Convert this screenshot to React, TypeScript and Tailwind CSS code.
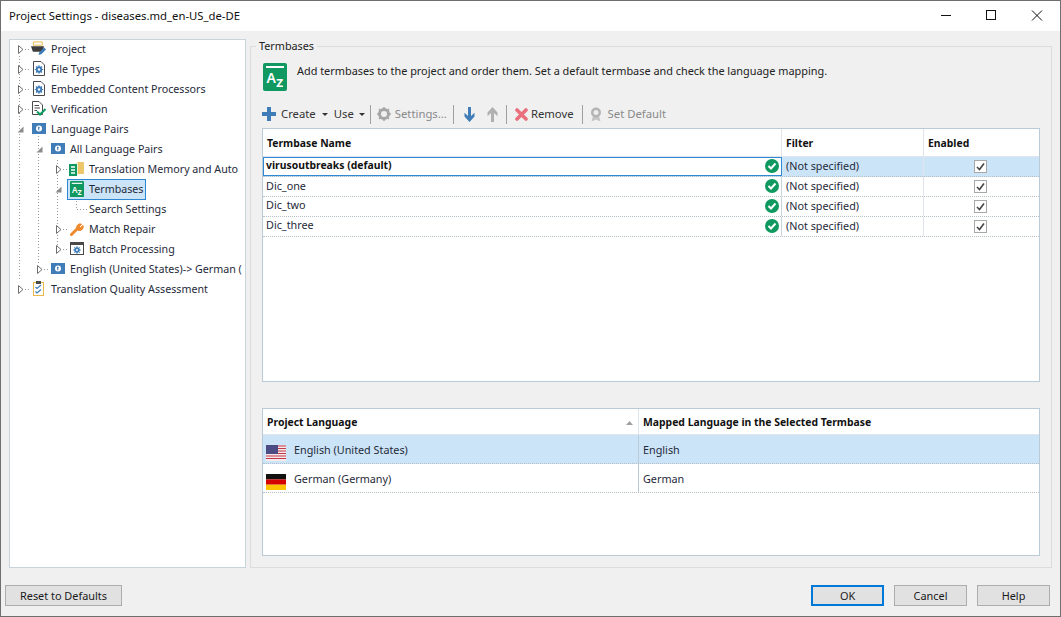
import type { ReactNode } from 'react';

const FONT = "font-['Noto_Sans','Open_Sans',sans-serif]";

function Arrow({ open }: { open?: boolean }) {
  return open ? (
    <svg width="7" height="7" viewBox="0 0 7 7" className="shrink-0">
      <path d="M6.5 0.5V6.5H0.5Z" fill="#8c8c8c" />
    </svg>
  ) : (
    <svg width="6" height="9" viewBox="0 0 6 9" className="shrink-0">
      <path d="M0.5 0.5L5 4.5L0.5 8.5Z" fill="#fff" stroke="#6e6e6e" />
    </svg>
  );
}

function GlobeIcon() {
  return (
    <svg width="14" height="11" viewBox="0 0 14 11">
      <rect width="14" height="11" fill="#3f7cb8" />
      <circle cx="7" cy="5.5" r="3" fill="#fff" />
      <path d="M6 3.5L8 4.5L7 6L7.5 7.5L6.2 7Z" fill="#3f7cb8" />
    </svg>
  );
}

function DocGearIcon() {
  return (
    <svg width="12" height="15" viewBox="0 0 12 15">
      <path d="M0.5 0.5H8L11.5 4V14.5H0.5Z" fill="#fff" stroke="#4a4a4a" />
      <circle cx="6" cy="8.5" r="3.2" fill="#3f7cb8" />
      <path d="M6 4.2V12.8M1.8 8.5H10.2M3 5.5L9 11.5M9 5.5L3 11.5" stroke="#3f7cb8" strokeWidth="1.1" />
      <circle cx="6" cy="8.5" r="1.2" fill="#fff" />
    </svg>
  );
}

function ProjectIcon() {
  return (
    <svg width="16" height="15" viewBox="0 0 16 15">
      <path d="M2.5 0.5H12V4H2.5Z" fill="#fff" stroke="#e8b84a" />
      <path d="M0 5H14L12 11H2Z" fill="#3d3d3d" />
      <path d="M8 14.5L9 11.5L14 6.5L16 8.5L11 13.5Z" fill="#3f7cb8" />
    </svg>
  );
}

function VerifyIcon() {
  return (
    <svg width="14" height="15" viewBox="0 0 14 15">
      <path d="M0.5 0.5H7L10.5 4V13.5H0.5Z" fill="#fff" stroke="#4a4a4a" />
      <path d="M2.5 4.5H7M2.5 7H8M2.5 9.5H5" stroke="#4a4a4a" />
      <path d="M5 10.5L8 13.5L13.5 8" fill="none" stroke="#0f9d66" strokeWidth="2" />
    </svg>
  );
}

function AzIcon({ size = 14 }: { size?: number }) {
  return (
    <svg width={size} height={(size * 7) / 6} viewBox="0 0 24 28" className="shrink-0">
      <rect width="24" height="28" rx="2" fill="#0f9960" />
      <rect x="3" y="3" width="18" height="2" fill="#fff" />
      <text x="3.5" y="20" fontSize="14" fontWeight="600" fill="#fff" fontFamily="'Noto Sans', sans-serif">A</text>
      <text x="13" y="24" fontSize="15" fontWeight="600" fill="#fff" fontFamily="'Noto Sans', sans-serif">z</text>
    </svg>
  );
}

function TmIcon() {
  return (
    <svg width="15" height="14" viewBox="0 0 15 14">
      <rect x="8" y="0" width="7" height="12" rx="1" fill="#eec66a" />
      <rect x="5" y="1" width="4" height="12" fill="#f4f0d8" />
      <rect x="0" y="2" width="8" height="12" fill="#0f9960" />
      <path d="M2 5H6M2 8H6M2 11H6" stroke="#fff" strokeWidth="1.4" />
    </svg>
  );
}

function WrenchIcon() {
  return (
    <svg width="14" height="14" viewBox="0 0 14 14">
      <path d="M1.5 12.5L7 7" stroke="#ee8a2c" strokeWidth="3" strokeLinecap="round" />
      <path d="M7 7A3.5 3.5 0 0 1 11.5 2.2L9.5 4.5L10.5 5.5L13 3.5A3.7 3.7 0 0 1 8 8.2Z" fill="#ee8a2c" stroke="#ee8a2c" />
    </svg>
  );
}

function BatchIcon() {
  return (
    <svg width="14" height="13" viewBox="0 0 14 13">
      <rect x="0.5" y="0.5" width="13" height="12" fill="#fff" stroke="#4a4a4a" />
      <rect x="0" y="0" width="14" height="3" fill="#4a4a4a" />
      <circle cx="7" cy="8" r="2.8" fill="#3f7cb8" />
      <path d="M7 4.2V11.8M3.2 8H10.8M4.3 5.3L9.7 10.7M9.7 5.3L4.3 10.7" stroke="#3f7cb8" />
      <circle cx="7" cy="8" r="1" fill="#fff" />
    </svg>
  );
}

function QaIcon() {
  return (
    <svg width="11" height="15" viewBox="0 0 11 15">
      <rect x="0.5" y="1.5" width="10" height="13" fill="#fff" stroke="#e8b84a" />
      <rect x="3" y="0" width="5" height="3" fill="#4a4a4a" />
      <path d="M2.5 6L4 7.5L8 4M2.5 10.5L4 12L8 8.5" fill="none" stroke="#3f7cb8" strokeWidth="1.2" />
    </svg>
  );
}

const TREE: { label: string; depth: number; open?: boolean; noArrow?: boolean; selected?: boolean; icon?: ReactNode }[] = [
  { label: 'Project', depth: 0, icon: <ProjectIcon /> },
  { label: 'File Types', depth: 0, icon: <DocGearIcon /> },
  { label: 'Embedded Content Processors', depth: 0, icon: <DocGearIcon /> },
  { label: 'Verification', depth: 0, icon: <VerifyIcon /> },
  { label: 'Language Pairs', depth: 0, open: true, icon: <GlobeIcon /> },
  { label: 'All Language Pairs', depth: 1, open: true, icon: <GlobeIcon /> },
  { label: 'Translation Memory and Auto', depth: 2, icon: <TmIcon /> },
  { label: 'Termbases', depth: 2, open: true, selected: true, icon: <AzIcon /> },
  { label: 'Search Settings', depth: 2, noArrow: true },
  { label: 'Match Repair', depth: 2, icon: <WrenchIcon /> },
  { label: 'Batch Processing', depth: 2, icon: <BatchIcon /> },
  { label: 'English (United States)-> German (', depth: 1, icon: <GlobeIcon /> },
  { label: 'Translation Quality Assessment', depth: 0, icon: <QaIcon /> },
];

const PAD = ['pl-[7px]', 'pl-[26px]', 'pl-[45px]'];

function TreeConnectors() {
  return (
    <svg width="100" height="270" className="absolute left-0 top-0 pointer-events-none">
      <g stroke="#9a9a9a" strokeDasharray="1 2" fill="none">
        <path d="M9.5 16V240" />
        <path d="M28.5 96V224" />
        <path d="M47.5 120V206" />
        <path d="M66.5 158V169.5H77" />
        <path d="M15 9.5H20M15 29.5H20M15 49.5H20M15 69.5H20M15 249.5H20M34 229.5H39M53 129.5H58M53 189.5H58M53 209.5H58" />
      </g>
    </svg>
  );
}

function Sep() {
  return <span className="block w-px h-[19px] bg-[#a0a0a0]" />;
}

function Caret() {
  return (
    <svg width="6" height="3" viewBox="0 0 6 3" className="block shrink-0">
      <path d="M0 0H6L3 3Z" fill="#333" />
    </svg>
  );
}

function Check() {
  return (
    <svg width="16" height="16" viewBox="0 0 16 16" className="shrink-0 -mt-[2px]">
      <circle cx="8" cy="8" r="7" fill="#0f9960" />
      <path d="M4.5 8L7 10.5L11.5 5.5" fill="none" stroke="#fff" strokeWidth="2" />
    </svg>
  );
}

function CheckBox() {
  return (
    <span className="w-[13px] h-[13px] border border-[#a8a8a8] bg-white flex items-center justify-center">
      <svg width="9" height="9" viewBox="0 0 9 9">
        <path d="M1 5L3.5 7.5L8 1.5" fill="none" stroke="#444" strokeWidth="1.6" />
      </svg>
    </span>
  );
}

function UsFlag() {
  return (
    <svg width="20" height="16" viewBox="0 0 20 16" className="shrink-0 mt-[10px]">
      <rect width="20" height="16" fill="#f6e9ea" />
      <path d="M0 1H20M0 3.5H20M0 6H20M0 8.5H20M0 11H20M0 13.5H20" stroke="#c0394b" strokeWidth="1.2" />
      <rect width="12" height="9" fill="#4d4d85" />
    </svg>
  );
}

function DeFlag() {
  return (
    <svg width="20" height="16" viewBox="0 0 20 16" className="shrink-0 mt-[10px]">
      <rect width="20" height="5.4" fill="#111" />
      <rect y="5.4" width="20" height="5.3" fill="#d40000" />
      <rect y="10.7" width="20" height="5.3" fill="#fcc400" />
    </svg>
  );
}

const TERMBASES = ['virusoutbreaks (default)', 'Dic_one', 'Dic_two', 'Dic_three'];

function FooterButton({ label, width, primary }: { label: string; width: string; primary?: boolean }) {
  return (
    <button
      className={`${width} h-[21px] pt-[2px] bg-[#e1e1e1] flex items-center justify-center text-[#1a1a1a] text-[10.9px] ${
        primary ? 'border-2 border-[#0078d7]' : 'border border-[#adadad]'
      }`}
    >
      {label}
    </button>
  );
}

export default function App() {
  return (
    <div className={`${FONT} w-[1061px] h-[617px] flex flex-col border border-[#6e6e6e] text-[10.8px] text-[#1f2a3a] bg-[#f0f0f0] overflow-hidden`}>
      <div className="h-[30px] shrink-0 bg-white flex items-center pl-[8px]">
        <span className="flex-1 text-[11.3px] text-[#111]">Project Settings - diseases.md_en-US_de-DE</span>
        <svg width="120" height="30" viewBox="0 0 120 30">
          <path d="M1 14.5H11" stroke="#111" />
          <rect x="46.5" y="9.5" width="9" height="9" fill="none" stroke="#111" />
          <path d="M92 9.5L102 19.5M102 9.5L92 19.5" stroke="#111" />
        </svg>
      </div>

      <div className="flex-1 flex flex-col px-[8px]">
        <div className="flex gap-[4px] mt-[8px] h-[529px]">
          <div className="relative w-[237px] shrink-0 bg-white border border-[#c8d4dc] text-[10.7px]">
            <TreeConnectors />
            <div className="-mt-px">
              {TREE.map((n) => (
                <div key={n.label} className={`relative h-5 flex items-center whitespace-nowrap ${PAD[n.depth]}`}>
                  <span className="w-[7px] flex justify-center">{!n.noArrow && <Arrow open={n.open} />}</span>
                  <span
                    className={`flex items-center ${
                      n.selected ? 'ml-[5px] h-[21px] pl-px pr-[2px] bg-[#cce4f7] border border-[#2a87d0]' : 'ml-[7px]'
                    }`}
                  >
                    <span className="w-[15px] flex justify-center">{n.icon}</span>
                    <span className="ml-[5px]">{n.label}</span>
                  </span>
                </div>
              ))}
            </div>
          </div>

          <fieldset className="flex-1 min-w-0 h-[529px] border border-[#dcdcdc] px-[11px] pb-[11px]">
            <legend className="ml-[-6px] px-[3px] text-[#222] leading-[14px]">Termbases</legend>
            <div className="flex items-start gap-[10px] h-[42px] pt-[10px] pl-px">
              <AzIcon size={24} />
              <span className="text-[#222] text-[10.9px] leading-[16px]">Add termbases to the project and order them. Set a default termbase and check the language mapping.</span>
            </div>
            <div className="flex items-center h-[24px] mt-[7px] text-[#333] text-[11.3px]">
              <svg width="14" height="14" viewBox="0 0 14 14">
                <path d="M5 0H9V5H14V9H9V14H5V9H0V5H5Z" fill="#3f7cb8" />
              </svg>
              <span className="ml-[5px]">Create</span>
              <span className="ml-[6px]"><Caret /></span>
              <span className="ml-[6px]">Use</span>
              <span className="ml-[5px]"><Caret /></span>
              <span className="ml-[5px]"><Sep /></span>
              <svg width="14" height="14" viewBox="0 0 14 14" className="ml-[6px]">
                <circle cx="7" cy="7" r="4.5" fill="none" stroke="#a6a6a6" strokeWidth="3" />
                <path d="M7 0V14M0 7H14M2 2L12 12M12 2L2 12" stroke="#a6a6a6" strokeWidth="1.6" strokeDasharray="2.4 9.6" />
              </svg>
              <span className="ml-[4px] text-[#8a8a8a]">Settings...</span>
              <span className="ml-[6px]"><Sep /></span>
              <svg width="11" height="15" viewBox="0 0 11 15" className="ml-[10px]">
                <path d="M4 0H7V9L10.5 5.8V9.5L5.5 15L0.5 9.5V5.8L4 9Z" fill="#3f7cb8" />
              </svg>
              <svg width="11" height="15" viewBox="0 0 11 15" className="ml-[12px]">
                <path d="M4 15H7V6L10.5 9.2V5.5L5.5 0L0.5 5.5V9.2L4 6Z" fill="#b0b0b0" />
              </svg>
              <span className="ml-[8px]"><Sep /></span>
              <svg width="13" height="13" viewBox="0 0 13 13" className="ml-[8px]">
                <path d="M2 2L11 11M11 2L2 11" stroke="#ea6f7d" strokeWidth="3.6" strokeLinecap="round" />
              </svg>
              <span className="ml-[3px]">Remove</span>
              <span className="ml-[8px]"><Sep /></span>
              <svg width="12" height="15" viewBox="0 0 12 15" className="ml-[7px]">
                <path d="M3 9L1.5 14.5L6 12.5L10.5 14.5L9 9Z" fill="#c4c4c4" />
                <circle cx="6" cy="5.5" r="5" fill="#b4b4b4" />
                <circle cx="6" cy="5.5" r="2.5" fill="#eee" />
              </svg>
              <span className="ml-[6px] text-[#8a8a8a]">Set Default</span>
            </div>

            <div className="h-[254px] mt-[2px] bg-white border border-[#b9cbd6] flex flex-col">
              <div className="h-[28px] flex font-bold text-[#111] text-[10.4px] shrink-0 border-b border-[#dfe5ea]">
                <div className="w-[519px] pl-[4px] pt-[2px] flex items-center border-r border-[#dfe5ea]">Termbase Name</div>
                <div className="w-[142px] pl-[4px] pt-[2px] flex items-center border-r border-[#dfe5ea]">Filter</div>
                <div className="flex-1 pl-[4px] pt-[2px] flex items-center">Enabled</div>
              </div>
              {TERMBASES.map((name, i) => (
                <div key={name} className={`h-5 flex border-b border-dotted border-[#b5bfc6] ${i === 0 ? 'bg-[#cce4f7]' : ''}`}>
                  <div
                    className={`w-[519px] flex items-center justify-between pr-px ${
                      i === 0
                        ? 'pl-[2px] bg-white border border-[#2f8ad6] font-bold text-[#111] text-[10.4px]'
                        : 'pl-[3px] border-r border-[#c8d4dc]'
                    }`}
                  >
                    <span className={i === 1 ? '' : '-mt-[2px]'}>{name}</span>
                    <Check />
                  </div>
                  <div className="w-[142px] pl-[4px] flex items-center border-r border-[#dfe5ea]">(Not specified)</div>
                  <div className="flex-1 flex items-center justify-center pr-[3px]">
                    <CheckBox />
                  </div>
                </div>
              ))}
            </div>

            <div className="h-[148px] mt-[26px] bg-white border border-[#b9cbd6] flex flex-col">
              <div className="h-[26px] flex font-bold text-[#111] text-[10.4px] shrink-0 border-b border-[#dfe5ea]">
                <div className="w-[376px] pl-[4px] pr-[5px] pt-[2px] flex items-center justify-between border-r border-[#dfe5ea]">
                  <span>Project Language</span>
                  <svg width="7" height="4" viewBox="0 0 7 4">
                    <path d="M3.5 0L7 4H0Z" fill="#a0a0a0" />
                  </svg>
                </div>
                <div className="flex-1 pl-[4px] pt-[2px] flex items-center">Mapped Language in the Selected Termbase</div>
              </div>
              <div className="h-[29px] flex bg-[#cce4f7] border-b border-dotted border-[#b5bfc6]">
                <div className="w-[376px] pl-[3px] flex items-start gap-[8px] border-r border-[#b9cbd6]">
                  <UsFlag />
                  <span className="leading-[30px]">English (United States)</span>
                </div>
                <div className="flex-1 pl-[4px] pt-[2px] flex items-center">English</div>
              </div>
              <div className="h-[29px] flex border-b border-dotted border-[#b5bfc6]">
                <div className="w-[376px] pl-[3px] flex items-start gap-[8px] border-r border-[#b9cbd6]">
                  <DeFlag />
                  <span className="leading-[30px]">German (Germany)</span>
                </div>
                <div className="flex-1 pl-[4px] pt-[2px] flex items-center">German</div>
              </div>
            </div>
          </fieldset>
        </div>

        <div className="flex items-center mt-[17px]">
          <div className="ml-[-4px]">
            <FooterButton label="Reset to Defaults" width="w-[117px]" />
          </div>
          <div className="flex-1" />
          <div className="flex gap-[10px] mr-[2px]">
            <FooterButton label="OK" width="w-[73px]" primary />
            <FooterButton label="Cancel" width="w-[73px]" />
            <FooterButton label="Help" width="w-[73px]" />
          </div>
        </div>
      </div>
    </div>
  );
}
